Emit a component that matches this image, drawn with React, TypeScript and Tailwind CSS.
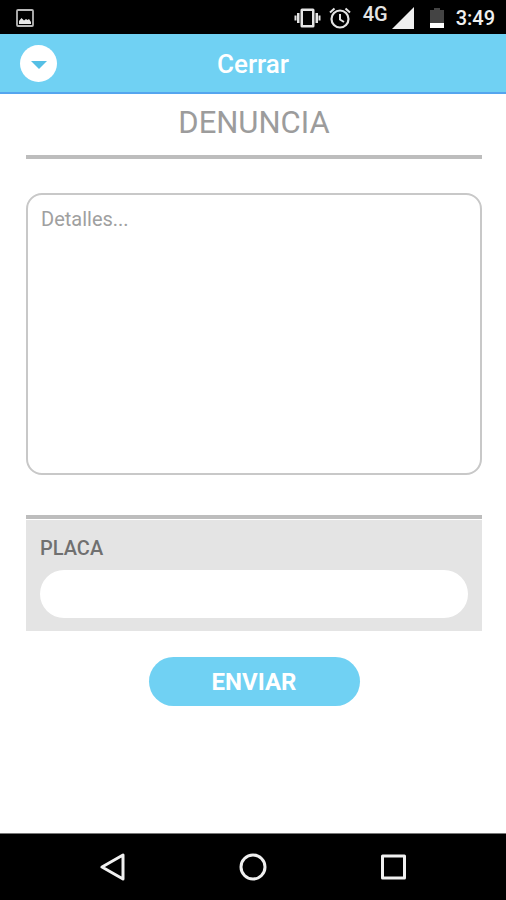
import React from "react";

function StatusBar() {
  return (
    <div className="flex h-[34px] shrink-0 items-center justify-between bg-black pt-0.5 pr-[11px] pl-4">
      <svg className="h-[18px] w-[18px]" viewBox="0 0 18 18" aria-label="Imagen">
        <rect x="1" y="1" width="16" height="16" rx="1" fill="none" stroke="#b9b9b9" strokeWidth="1.8" />
        <path d="M3 15v-3l2.500-3 2.500 2.500 2-1.500 1.500 1L13 10l2 3v2z" fill="#e8e8e8" />
      </svg>
      <div className="flex items-center text-white">
        <svg className="mr-2 h-[22px] w-[27px]" viewBox="0 0 27 22" fill="#e4e4e4" aria-label="Vibración">
          <path
            fillRule="evenodd"
            d="M8 1.500h11a1.500 1.500 0 0 1 1.500 1.500v16a1.500 1.500 0 0 1-1.500 1.500H8a1.500 1.500 0 0 1-1.500-1.500V3A1.500 1.500 0 0 1 8 1.500zM9 4v14h9V4z"
          />
          <path d="M3 6h2.500v10H3zM.5 8.500h2v5h-2zM21.500 6H24v10h-2.500zM24.500 8.500h2v5h-2z" />
        </svg>
        <svg
          className="mr-3 h-[22px] w-[22px]"
          viewBox="0 0 22 22"
          fill="none"
          stroke="#e4e4e4"
          strokeWidth="2.200"
          aria-label="Alarma"
        >
          <circle cx="11" cy="12" r="8.500" />
          <path d="M11 7v5.500l4 2.500M1 5.500l4.500-4M21 5.500l-4.500-4" strokeWidth="2" />
        </svg>
        <span className="mr-1 self-start text-xl leading-4 font-medium text-[#e4e4e4]">4G</span>
        <svg className="mr-4 h-[22px] w-[22px]" viewBox="0 0 22 22" fill="#efefef" aria-label="Señal">
          <path d="M22 0v22H0z" />
        </svg>
        <svg className="mr-3 h-[22px] w-[14px]" viewBox="0 0 14 22" aria-label="Batería">
          <path d="M4 1h6v2h4v13H0V3h4z" fill="#444" />
          <path d="M0 16h14v5H0z" fill="#fff" />
        </svg>
        <span className="text-xl leading-6 font-medium text-[#f0f0f0]">3:49</span>
      </div>
    </div>
  );
}

function Header() {
  return (
    <header className="grid h-[60px] shrink-0 grid-cols-[1fr_auto_1fr] items-center border-b-2 border-[#55a5ee] bg-[#70d1f3] px-5">
      <button type="button" aria-label="Cerrar formulario" className="flex h-[37px] w-[37px] items-center justify-center rounded-full bg-white">
        <svg className="mt-1 h-2 w-4" viewBox="0 0 16 8" fill="#55bfe5">
          <path d="M0 0h16L8 8z" />
        </svg>
      </button>
      <span className="pt-0.5 text-[26px] leading-8 font-medium text-white">Cerrar</span>
    </header>
  );
}

function NavBar() {
  return (
    <nav className="flex h-[67px] shrink-0 items-center justify-center gap-28 border-t border-[#777] bg-black">
      <button type="button" aria-label="Atrás">
        <svg className="h-7 w-7" viewBox="0 0 28 28" fill="none" stroke="#f0f0f0" strokeWidth="3" strokeLinejoin="round">
          <path d="M3 14L24 2v24z" />
        </svg>
      </button>
      <button type="button" aria-label="Inicio">
        <svg className="h-7 w-7" viewBox="0 0 28 28" fill="none" stroke="#f0f0f0" strokeWidth="3">
          <circle cx="14" cy="14" r="12" />
        </svg>
      </button>
      <button type="button" aria-label="Recientes">
        <svg className="h-7 w-7" viewBox="0 0 28 28" fill="none" stroke="#f0f0f0" strokeWidth="3" strokeLinejoin="round">
          <rect x="3.500" y="3" width="22" height="22" />
        </svg>
      </button>
    </nav>
  );
}

export default function App() {
  return (
    <div className="flex min-h-screen flex-col bg-white font-['Roboto',sans-serif]">
      <StatusBar />
      <Header />
      <main className="flex-1 pr-6 pl-[26px]">
        <h1 className="border-b-4 border-[#bdbdbd] pt-2 pb-[11px] text-center text-[31px] leading-[42px] font-normal text-[#9c9c9c]">
          DENUNCIA
        </h1>
        <form className="flex flex-col pt-[34px]" onSubmit={(e) => e.preventDefault()}>
          <textarea
            aria-label="Detalles"
            placeholder="Detalles..."
            className="block h-[282px] w-full resize-none rounded-2xl border-2 border-[#c8c8c8] px-[13px] py-3 text-xl leading-6 outline-none placeholder:text-[#a0a0a0]"
          />
          <div className="mt-10 border-t-4 border-[#bdbdbd] pt-px">
            <div className="bg-[#e4e4e4] px-3.5 pt-4 pb-[13px]">
              <label htmlFor="placa" className="block text-xl leading-6 font-medium text-[#707070]">
                PLACA
              </label>
              <input id="placa" type="text" className="mt-2.5 block h-12 w-full rounded-full bg-white px-5 text-xl outline-none" />
            </div>
          </div>
          <button
            type="submit"
            className="mt-[26px] h-[49px] w-[211px] self-center rounded-full bg-[#70d1f3] text-2xl font-bold text-white"
          >
            ENVIAR
          </button>
        </form>
      </main>
      <NavBar />
    </div>
  );
}
